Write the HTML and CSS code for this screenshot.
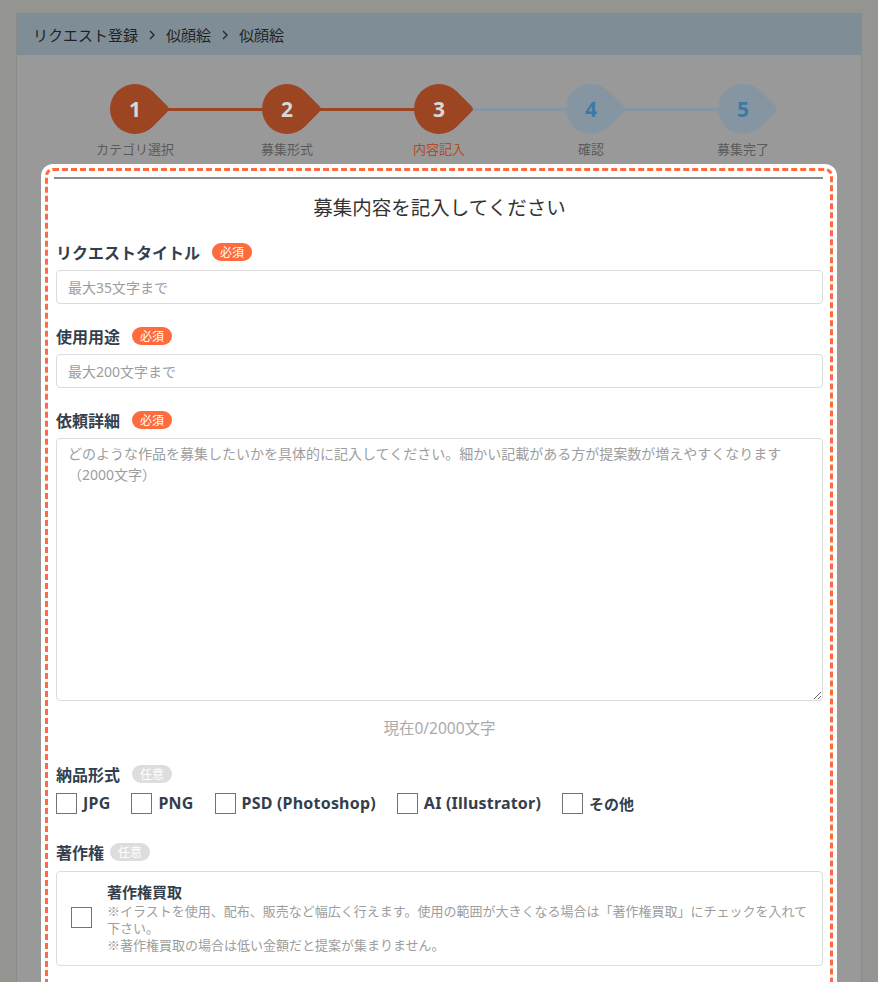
FILE: index.html
```html
<!DOCTYPE html>
<html lang="ja">
<head>
<meta charset="utf-8">
<title>リクエスト登録</title>
<link rel="stylesheet" href="styles.css">
</head>
<body>
<div class="page">
  <div class="panel">
    <nav class="crumbs">
      <span>リクエスト登録</span>
      <svg class="chev" width="6" height="10" viewBox="0 0 6 10"><polyline points="1,1 5,5 1,9" fill="none" stroke="#2a2a2a" stroke-width="1.4"/></svg>
      <span>似顔絵</span>
      <svg class="chev" width="6" height="10" viewBox="0 0 6 10"><polyline points="1,1 5,5 1,9" fill="none" stroke="#2a2a2a" stroke-width="1.4"/></svg>
      <span>似顔絵</span>
    </nav>
    <div class="panel-body">
      <ol class="steps">
        <li class="step done"><div class="marker"><span class="pin"></span><span class="num">1</span></div><span class="step-label">カテゴリ選択</span></li>
        <li class="step done"><div class="marker"><span class="pin"></span><span class="num">2</span></div><span class="step-label">募集形式</span></li>
        <li class="step current"><div class="marker"><span class="pin"></span><span class="num">3</span></div><span class="step-label">内容記入</span></li>
        <li class="step todo"><div class="marker"><span class="pin"></span><span class="num">4</span></div><span class="step-label">確認</span></li>
        <li class="step todo last"><div class="marker"><span class="pin"></span><span class="num">5</span></div><span class="step-label">募集完了</span></li>
      </ol>

      <div class="spotlight">
        <div class="spot-inner">
          <div class="top-line"></div>
          <h2 class="form-title">募集内容を記入してください</h2>

          <div class="field">
            <div class="field-label"><span class="label-text">リクエストタイトル</span><span class="badge req">必須</span></div>
            <input class="text-input" type="text" placeholder="最大35文字まで">
          </div>

          <div class="field">
            <div class="field-label"><span class="label-text">使用用途</span><span class="badge req">必須</span></div>
            <input class="text-input" type="text" placeholder="最大200文字まで">
          </div>

          <div class="field field-detail">
            <div class="field-label"><span class="label-text">依頼詳細</span><span class="badge req">必須</span></div>
            <textarea class="text-area" placeholder="どのような作品を募集したいかを具体的に記入してください。細かい記載がある方が提案数が増えやすくなります（2000文字）"></textarea>
            <div class="counter">現在0/2000文字</div>
          </div>

          <div class="field field-format">
            <div class="field-label"><span class="label-text">納品形式</span><span class="badge opt">任意</span></div>
            <div class="checks">
              <label class="check"><input type="checkbox"><span class="latin">JPG</span></label>
              <label class="check"><input type="checkbox"><span class="latin">PNG</span></label>
              <label class="check"><input type="checkbox"><span class="latin">PSD (Photoshop)</span></label>
              <label class="check"><input type="checkbox"><span class="latin">AI (Illustrator)</span></label>
              <label class="check"><input type="checkbox"><span>その他</span></label>
            </div>
          </div>

          <div class="field">
            <div class="field-label rights-label"><span class="label-text">著作権</span><span class="badge opt tight">任意</span></div>
            <label class="rights-box">
              <input type="checkbox">
              <div class="rights-text">
                <div class="rights-title">著作権買取</div>
                <p class="rights-desc">※イラストを使用、配布、販売など幅広く行えます。使用の範囲が大きくなる場合は「著作権買取」にチェックを入れて下さい。<br>※著作権買取の場合は低い金額だと提案が集まりません。</p>
              </div>
            </label>
          </div>
        </div>
      </div>
    </div>
  </div>
</div>
</body>
</html>
```

FILE: styles.css
```css
html, body {
  margin: 0;
  padding: 0;
  overflow: hidden;
  background: #949490;
  font-family: "Noto Sans", "Noto Sans CJK JP", sans-serif;
}

.page {
  padding: 13px 16px 0;
}

.panel {
  border: 1px solid #8a8a88;
  border-bottom: none;
  background: #999999;
  height: 969px;
  overflow: hidden;
}

.crumbs {
  height: 41px;
  background: #7f8d96;
  display: flex;
  align-items: center;
  padding: 0 16px;
  font-family: "Noto Sans CJK JP", sans-serif;
  font-size: 15px;
  color: #222;
}

.chev {
  margin: 0 11px 0 11px;
}

.panel-body {
  padding-top: 29px;
}

/* steps */
.steps {
  list-style: none;
  margin: 0 auto;
  padding: 0;
  width: 760px;
  display: grid;
  grid-template-columns: repeat(5, 152px);
}

.step {
  position: relative;
  display: flex;
  flex-direction: column;
  align-items: center;
}

.step::after {
  content: "";
  position: absolute;
  left: 100px;
  width: 128px;
  top: 24px;
  height: 3px;
  background: #9c4523;
  z-index: 0;
}

.step.current::after,
.step.todo::after {
  background: #8596a2;
}

.step.last::after {
  display: none;
}

.marker {
  position: relative;
  width: 50px;
  height: 50px;
  display: flex;
  align-items: center;
  justify-content: center;
  z-index: 1;
}

.pin {
  position: absolute;
  inset: 0;
  border-radius: 50% 4px 50% 50%;
  transform: rotate(45deg);
  background: #9c4523;
}

.todo .pin {
  background: #8596a2;
}

.num {
  position: relative;
  font-family: "Open Sans", "Noto Sans", sans-serif;
  font-weight: 700;
  font-size: 21px;
  color: #d8d8d8;
}

.todo .num {
  color: #3b7aa4;
}

.step-label {
  margin-top: 6px;
  font-family: "Noto Sans CJK JP", sans-serif;
  font-size: 13px;
  line-height: 18px;
  color: #5a5a5a;
}

.current .step-label {
  color: #b24a29;
}

/* spotlight card */
.spotlight {
  width: 796px;
  margin: 6px auto 0;
  background: #fff;
  border-radius: 12px;
  padding: 4px;
  box-sizing: border-box;
}

.spot-inner {
  border: 3px dashed #ff6b3d;
  border-radius: 8px;
  padding: 6px 7px 40px 8px;
}

.top-line {
  height: 2px;
  background: #8c8c8c;
  margin-left: -2px;
}

.form-title {
  margin: 14px 0 19px;
  text-align: center;
  font-family: "Noto Sans CJK JP", sans-serif;
  font-weight: 400;
  font-size: 19.5px;
  line-height: 28px;
  color: #333;
}

.field {
  margin-bottom: 20px;
}

.field-label {
  display: flex;
  align-items: center;
  height: 24px;
  margin-bottom: 6px;
}

.rights-label {
  margin-bottom: 7px;
}

.label-text {
  font-family: "Noto Sans CJK JP", sans-serif;
  font-weight: 700;
  font-size: 16px;
  color: #333f4c;
}

.badge {
  margin-left: 12px;
  width: 40px;
  height: 18px;
  border-radius: 9px;
  display: inline-flex;
  align-items: center;
  justify-content: center;
  font-family: "Noto Sans CJK JP", sans-serif;
  font-size: 12px;
  line-height: 1;
  color: #fff;
}

.badge.req {
  background: #ff6b3d;
}

.badge.opt {
  background: #dddddd;
}

.badge.tight {
  margin-left: 6px;
}

.text-input,
.text-area {
  display: block;
  width: 100%;
  box-sizing: border-box;
  border: 1px solid #dcdcdc;
  border-radius: 4px;
  font-family: "Noto Sans", "Noto Sans CJK JP", sans-serif;
  font-size: 14px;
  color: #333;
  background: #fff;
  margin: 0;
}

.text-input {
  height: 34px;
  padding: 0 11px;
}

.text-area {
  height: 263px;
  padding: 4px 11px;
  line-height: 21px;
  resize: vertical;
}

.text-input::placeholder,
.text-area::placeholder {
  color: #9d9d9d;
  opacity: 1;
}

.counter {
  margin-top: 17px;
  text-align: center;
  font-size: 15.5px;
  line-height: 20px;
  color: #aaaaaa;
}

.field-detail {
  margin-bottom: 24px;
}

.field-format {
  margin-bottom: 26px;
}

.checks {
  display: flex;
  align-items: center;
  gap: 21px;
  height: 22px;
}

.check {
  display: flex;
  align-items: center;
  gap: 6px;
  font-family: "Noto Sans CJK JP", sans-serif;
  font-size: 15px;
  font-weight: 700;
  color: #333f4c;
}

.check .latin {
  font-family: "Noto Sans", sans-serif;
  font-size: 16px;
  letter-spacing: 0.2px;
}

.check input,
.rights-box input {
  appearance: none;
  -webkit-appearance: none;
  width: 21px;
  height: 21px;
  margin: 0;
  border: 1px solid #737373;
  border-radius: 0;
  background: #fff;
  flex: none;
}

.rights-box {
  display: flex;
  align-items: center;
  gap: 15px;
  border: 1px solid #dcdcdc;
  border-radius: 4px;
  padding: 10px 10px 12px 14px;
}

.rights-text {
  flex: 1;
}

.rights-title {
  font-family: "Noto Sans CJK JP", sans-serif;
  font-weight: 700;
  font-size: 15px;
  line-height: 20px;
  color: #333f4c;
}

.rights-desc {
  margin: 0;
  font-family: "Noto Sans CJK JP", sans-serif;
  font-size: 13px;
  line-height: 17px;
  color: #9d9d9d;
}
```
